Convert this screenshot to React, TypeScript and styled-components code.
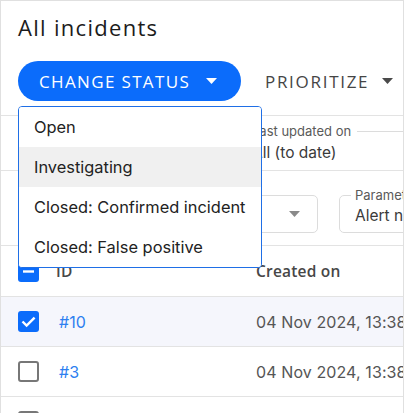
import React from 'react';
import styled, { createGlobalStyle } from 'styled-components';

const HEAD_FONT = `"Open Sans", "Liberation Sans", sans-serif`;
const BODY_FONT = `Inter, "Noto Sans", sans-serif`;

const GlobalStyle = createGlobalStyle`
  html, body {
    margin: 0;
    padding: 0;
    background: #ffffff;
  }
  * {
    box-sizing: border-box;
  }
`;

type Row = { id: string; created: string; checked: boolean; selected: boolean };

const rows: Row[] = [
  { id: '#10', created: '04 Nov 2024, 13:38', checked: true, selected: true },
  { id: '#3', created: '04 Nov 2024, 13:38', checked: false, selected: false },
  { id: '#2', created: '04 Nov 2024, 13:37', checked: false, selected: false },
];

const statuses: string[] = ['Open', 'Investigating', 'Closed: Confirmed incident', 'Closed: False positive'];

const Caret: React.FC<{ color: string }> = ({ color }) => (
  <svg width="11" height="6" viewBox="0 0 11 6">
    <path d="M0 0 L11 0 L5.5 6 Z" fill={color} />
  </svg>
);

const CheckBox: React.FC<{ state: 'on' | 'off' | 'mixed' }> = ({ state }) => (
  <Box $state={state}>
    {state === 'on' && (
      <svg width="21" height="21" viewBox="0 0 21 21">
        <path d="M4.5 10.5 L8.6 14.6 L16.6 6.6" stroke="#fff" strokeWidth="2.4" fill="none" />
      </svg>
    )}
    {state === 'mixed' && (
      <svg width="21" height="21" viewBox="0 0 21 21">
        <path d="M5 10.5 H16" stroke="#fff" strokeWidth="2.4" />
      </svg>
    )}
  </Box>
);

const App: React.FC = () => {
  return (
    <Page>
      <GlobalStyle />
      <TopBar>
        <Title>All incidents</Title>
        <Toolbar>
          <PrimaryButton>
            CHANGE STATUS
            <Caret color="#ffffff" />
          </PrimaryButton>
          <TextButton>
            PRIORITIZE
            <Caret color="#4a4a4a" />
          </TextButton>
        </Toolbar>
      </TopBar>

      <FilterRow $height={55}>
        <DateField $width={221}>
          <LegendLine>
            <LegendText>Created on</LegendText>
            <Rule />
          </LegendLine>
          <FieldValue>All (to date)</FieldValue>
        </DateField>
        <DateField $width={200}>
          <LegendLine>
            <LegendText>Last updated on</LegendText>
            <Rule />
          </LegendLine>
          <FieldValue>All (to date)</FieldValue>
        </DateField>
      </FilterRow>

      <FilterRow $height={75}>
        <SelectRow>
          <SelectBox>
            <SelectText>Status</SelectText>
            <Caret color="#8a8a8a" />
          </SelectBox>
          <ParamField>
            <ParamLegend>Parameter</ParamLegend>
            <ParamValue>Alert name</ParamValue>
          </ParamField>
        </SelectRow>
      </FilterRow>

      <HeaderRow>
        <CheckCell>
          <CheckBox state="mixed" />
        </CheckCell>
        <HeadCell>ID</HeadCell>
        <HeadCell>Created on</HeadCell>
      </HeaderRow>

      {rows.map((r) => (
        <BodyRow key={r.id} $selected={r.selected}>
          <CheckCell>
            <CheckBox state={r.checked ? 'on' : 'off'} />
          </CheckCell>
          <IdLink>{r.id}</IdLink>
          <DateCell>{r.created}</DateCell>
        </BodyRow>
      ))}

      <Menu>
        {statuses.map((s) => (
          <MenuItem key={s} $active={s === 'Investigating'}>
            {s}
          </MenuItem>
        ))}
      </Menu>
    </Page>
  );
};

const Page: any = styled.div`
  position: relative;
  width: 404px;
  height: 413px;
  border: 1px solid #e0e0e0;
  border-bottom: none;
  overflow: hidden;
  background: #ffffff;
`;

const TopBar: any = styled.div`
  height: 115px;
  padding: 12px 0 0 17px;
  border-bottom: 1px solid #e3e3e3;
`;

const Title: any = styled.h1`
  margin: 0;
  font-family: ${HEAD_FONT};
  font-size: 22px;
  line-height: 28px;
  font-weight: 500;
  color: #1c1c1c;
  letter-spacing: 1.3px;
`;

const Toolbar: any = styled.div`
  display: flex;
  align-items: center;
  gap: 24px;
  margin-top: 20px;
`;

const PrimaryButton: any = styled.button`
  display: flex;
  align-items: center;
  gap: 16px;
  height: 40px;
  width: 223px;
  padding: 0 0 0 21px;
  border: none;
  border-radius: 20px;
  background: #0b6cfb;
  color: #ffffff;
  font-family: ${HEAD_FONT};
  font-size: 17px;
  font-weight: 500;
  letter-spacing: 1.35px;
  white-space: nowrap;
`;

const TextButton: any = styled.button`
  display: flex;
  align-items: center;
  gap: 13px;
  height: 40px;
  padding: 0;
  border: none;
  background: transparent;
  color: #454545;
  font-family: ${HEAD_FONT};
  font-size: 17px;
  font-weight: 500;
  letter-spacing: 1.7px;
  white-space: nowrap;
`;

const FilterRow: any = styled.div<{ $height: number }>`
  display: flex;
  height: ${(p) => p.$height}px;
  padding-left: 30px;
  border-bottom: 1px solid #e3e3e3;
`;

const DateField: any = styled.div<{ $width: number }>`
  display: flex;
  flex-direction: column;
  flex: 0 0 ${(p) => p.$width}px;
  padding-top: 8px;
`;

const LegendLine: any = styled.div`
  display: flex;
  align-items: center;
  gap: 6px;
  height: 14px;
`;

const LegendText: any = styled.span`
  font-family: ${BODY_FONT};
  font-size: 13px;
  color: #5a5a5a;
  white-space: nowrap;
`;

const Rule: any = styled.div`
  flex: 1;
  height: 1px;
  background: #dcdcdc;
`;

const FieldValue: any = styled.div`
  margin-top: 5px;
  font-family: ${BODY_FONT};
  font-size: 15.5px;
  color: #3a3a3a;
`;

const SelectRow: any = styled.div`
  display: flex;
  align-items: flex-start;
  gap: 21px;
  padding: 17px 0 0 110px;
`;

const SelectBox: any = styled.div`
  display: flex;
  align-items: center;
  justify-content: space-between;
  width: 177px;
  height: 38px;
  margin-top: 7px;
  padding: 0 17px 0 12px;
  border: 1px solid #dcdcdc;
  border-radius: 5px;
`;

const SelectText: any = styled.span`
  font-family: ${BODY_FONT};
  font-size: 15px;
  color: #3a3a3a;
`;

const ParamField: any = styled.fieldset`
  width: 160px;
  height: 45px;
  margin: 0;
  padding: 0 15px;
  border: 1px solid #dcdcdc;
  border-radius: 5px;
`;

const ParamLegend: any = styled.legend`
  margin-left: -4px;
  padding: 0 4px;
  font-family: ${BODY_FONT};
  font-size: 13px;
  line-height: 14px;
  color: #5a5a5a;
`;

const ParamValue: any = styled.div`
  margin-top: 4px;
  font-family: ${BODY_FONT};
  font-size: 15.5px;
  color: #3a3a3a;
  white-space: nowrap;
`;

const HeaderRow: any = styled.div`
  display: grid;
  grid-template-columns: 38px 200px 1fr;
  align-items: center;
  height: 51px;
  padding-left: 17px;
  border-bottom: 1px solid #e3e3e3;
`;

const BodyRow: any = styled.div<{ $selected: boolean }>`
  display: grid;
  grid-template-columns: 38px 200px 1fr;
  align-items: center;
  height: 50px;
  padding-left: 17px;
  border-bottom: 1px solid #e3e3e3;
  background: ${(p) => (p.$selected ? '#f5f6fc' : '#ffffff')};
`;

const CheckCell: any = styled.div`
  display: flex;
  align-items: center;
`;

const Box: any = styled.div<{ $state: string }>`
  width: 21px;
  height: 21px;
  border-radius: 3px;
  background: ${(p) => (p.$state === 'off' ? '#ffffff' : '#0b6cfb')};
  border: ${(p) => (p.$state === 'off' ? '2px solid #777777' : 'none')};
  display: flex;
  align-items: center;
  justify-content: center;
`;

const HeadCell: any = styled.div`
  font-family: ${HEAD_FONT};
  font-size: 15.5px;
  font-weight: 600;
  color: #474747;
  white-space: nowrap;
  letter-spacing: 0.2px;
`;

const IdLink: any = styled.a`
  padding-left: 3px;
  font-family: ${BODY_FONT};
  font-size: 16px;
  color: #2d7ff0;
  text-decoration: none;
`;

const DateCell: any = styled.div`
  font-family: ${BODY_FONT};
  font-size: 16px;
  color: #555555;
  white-space: nowrap;
  letter-spacing: 0.1px;
`;

const Menu: any = styled.div`
  position: absolute;
  top: 105px;
  left: 17px;
  width: 244px;
  padding: 0;
  border: 1px solid #1f6fe6;
  border-radius: 4px;
  background: #ffffff;
  overflow: hidden;
`;

const MenuItem: any = styled.div<{ $active: boolean }>`
  height: 40px;
  display: flex;
  align-items: center;
  padding-left: 15px;
  font-family: ${BODY_FONT};
  font-size: 16.4px;
  color: #222222;
  background: ${(p) => (p.$active ? '#f0f0f0' : '#ffffff')};
  white-space: nowrap;
`;

export default App;
